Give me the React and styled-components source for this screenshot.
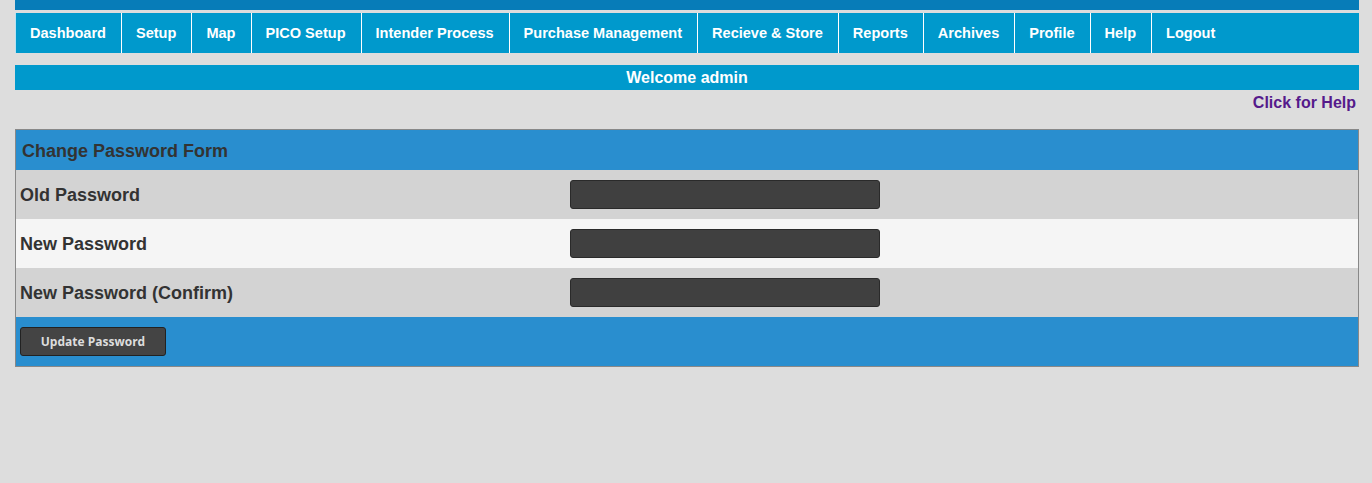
import React from 'react';
import styled, { createGlobalStyle } from 'styled-components';

const GlobalStyle = createGlobalStyle`
  html, body {
    margin: 0;
    padding: 0;
    background: #dddddd;
    font-family: "Liberation Sans", Arial, sans-serif;
  }
`;

const Page = styled.div`
  width: 1344px;
  margin-left: 15px;
  display: flex;
  flex-direction: column;
`;

const TopBar = styled.div`
  height: 10px;
  background: #077cb8;
`;

const Nav = styled.ul`
  list-style: none;
  margin: 3px 0 0 0;
  padding: 0;
  display: flex;
  height: 40px;
  background: #0099cc;
`;

const NavItem = styled.li`
  display: flex;
  align-items: center;
  padding: 0 15px 0 14px;
  border-left: 1px solid ${({ $first }) => ($first ? '#b8e2f0' : '#ffffff')};
  color: #ffffff;
  font-weight: bold;
  font-size: 14.56px;
  white-space: nowrap;
`;

const Welcome = styled.div`
  margin-top: 12px;
  height: 25px;
  background: #0099cc;
  color: #ffffff;
  font-weight: bold;
  font-size: 16px;
  display: flex;
  align-items: center;
  justify-content: center;
`;

const HelpRow = styled.div`
  display: flex;
  justify-content: flex-end;
  padding: 4px 3px 0 0;
  height: 39px;
  box-sizing: border-box;
`;

const HelpLink = styled.a`
  color: #551a8b;
  font-weight: bold;
  font-size: 16px;
  text-decoration: none;
`;

const Form = styled.div`
  border: 1px solid #888888;
  display: flex;
  flex-direction: column;
`;

const FormHeader = styled.div`
  height: 40px;
  box-sizing: border-box;
  padding: 2px 0 0 6px;
  background: #298ecf;
  color: #333333;
  font-weight: bold;
  font-size: 18px;
  display: flex;
  align-items: center;
`;

const Row = styled.div`
  display: grid;
  grid-template-columns: 550px 1fr;
  align-items: center;
  height: 49px;
  background: ${({ $light }) => ($light ? '#f5f5f5' : '#d3d3d3')};
`;

const Label = styled.div`
  padding: 2px 0 0 4px;
  color: #333333;
  font-weight: bold;
  font-size: 18px;
`;

const Field = styled.input`
  box-sizing: border-box;
  width: 310px;
  height: 29px;
  margin-left: 4px;
  background: #404040;
  border: 1px solid #2a2a2a;
  border-radius: 3px;
  color: #eeeeee;
  outline: none;
`;

const Footer = styled.div`
  height: 49px;
  background: #298ecf;
  display: flex;
  align-items: center;
  padding-left: 4px;
`;

const Button = styled.button`
  box-sizing: border-box;
  width: 146px;
  height: 29px;
  background: #444444;
  border: 1px solid #222222;
  border-radius: 3px;
  color: #dddddd;
  font-family: "Open Sans", "Liberation Sans", sans-serif;
  font-weight: bold;
  font-size: 12px;
  padding: 0;
`;

const menu = [
  'Dashboard', 'Setup', 'Map', 'PICO Setup', 'Intender Process',
  'Purchase Management', 'Recieve & Store', 'Reports', 'Archives',
  'Profile', 'Help', 'Logout',
];

const fields = ['Old Password', 'New Password', 'New Password (Confirm)'];

const App = () => (
  <>
    <GlobalStyle />
    <Page>
      <TopBar />
      <Nav>
        {menu.map((item, i) => (
          <NavItem key={item} $first={i === 0}>{item}</NavItem>
        ))}
      </Nav>
      <Welcome>Welcome admin</Welcome>
      <HelpRow>
        <HelpLink href="#">Click for Help</HelpLink>
      </HelpRow>
      <Form>
        <FormHeader>Change Password Form</FormHeader>
        {fields.map((f, i) => (
          <Row key={f} $light={i % 2 === 1}>
            <Label>{f}</Label>
            <div><Field type="password" /></div>
          </Row>
        ))}
        <Footer>
          <Button>Update Password</Button>
        </Footer>
      </Form>
    </Page>
  </>
);

export default App;
